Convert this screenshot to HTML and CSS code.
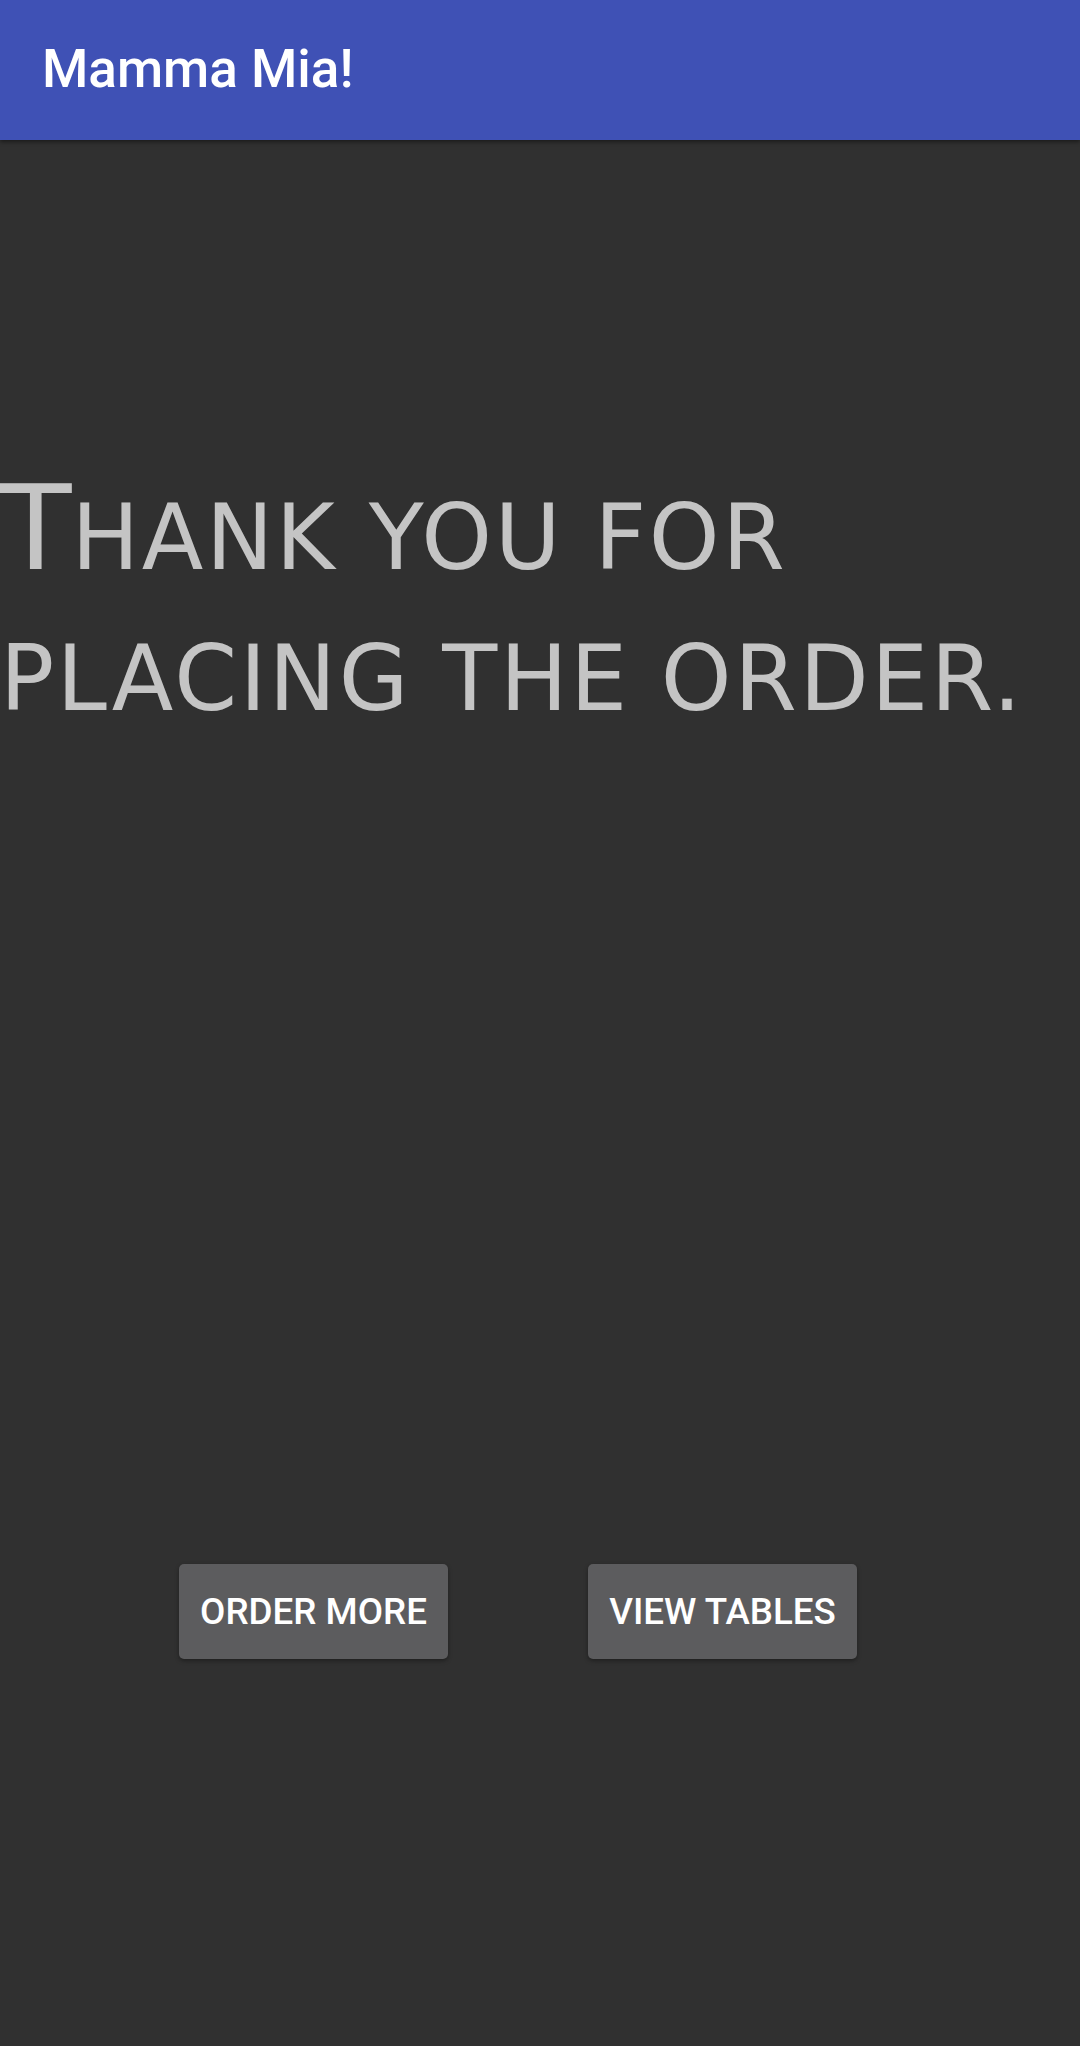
FILE: index.html
```html
<!DOCTYPE html>
<html lang="en">
<head>
<meta charset="utf-8">
<title>Mamma Mia!</title>
<link rel="stylesheet" href="styles.css">
</head>
<body>
<header class="appbar">
  <h1 class="appbar-title">Mamma Mia!</h1>
</header>
<main class="content">
  <p class="thanks"><span class="initial">T</span><span class="sc">hank you for<br>placing the order.</span></p>
  <div class="actions">
    <button class="btn" type="button">Order more</button>
    <button class="btn" type="button">View tables</button>
  </div>
</main>
</body>
</html>
```

FILE: styles.css
```css
* { box-sizing: border-box; }
html, body {
  margin: 0;
  padding: 0;
  width: 1080px;
  height: 2046px;
  background: #303030;
  overflow: hidden;
}
body {
  font-family: Roboto, "Liberation Sans", sans-serif;
}
.appbar {
  height: 140px;
  background: #3f51b5;
  display: flex;
  align-items: center;
  padding-left: 42px;
  box-shadow: 0 2px 4px rgba(0,0,0,0.45);
  position: relative;
  z-index: 1;
}
.appbar-title {
  margin: 0;
  color: #ffffff;
  font-family: Roboto, sans-serif;
  font-weight: 500;
  font-size: 53px;
  line-height: 1;
  margin-top: -2px;
}
.content {
  display: flex;
  flex-direction: column;
}
.thanks {
  margin: 327px 0 0 0;
  color: #c4c4c4;
  font-family: "DejaVu Sans", sans-serif;
  font-weight: 400;
  font-size: 90px;
  line-height: 141px;
  white-space: nowrap;
}
.initial {
  font-size: 117px;
  line-height: 0;
}
.sc {
  font-size: 90px;
  line-height: 141px;
  text-transform: uppercase;
  letter-spacing: 2.6px;
}
.actions {
  display: flex;
  gap: 140px;
  margin: 815px 0 0 179px;
}
.btn {
  width: 269px;
  height: 95px;
  border: none;
  border-radius: 5px;
  background: #5c5c5e;
  color: #ffffff;
  font-family: Roboto, sans-serif;
  font-weight: 500;
  font-size: 36.75px;
  text-transform: uppercase;
  padding: 0;
  box-shadow: 0 2px 4px rgba(0,0,0,0.35);
}
```
